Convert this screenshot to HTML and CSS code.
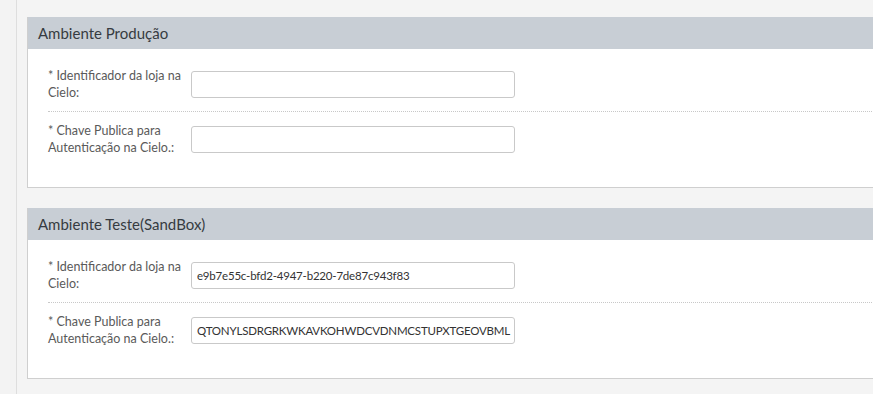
FILE: index.html
```html
<!DOCTYPE html>
<html lang="pt">
<head>
<meta charset="utf-8">
<link rel="stylesheet" href="styles.css">
</head>
<body>
<div class="page">
  <div class="sidebar"></div>
  <main class="content">
    <section class="panel">
      <header class="panel-head">Ambiente Produção</header>
      <div class="panel-body">
        <div class="row">
          <label class="label">* Identificador da loja na Cielo:</label>
          <input class="field" type="text" value="">
        </div>
        <div class="row">
          <label class="label">* Chave Publica para Autenticação na Cielo.:</label>
          <input class="field" type="text" value="">
        </div>
      </div>
    </section>
    <section class="panel">
      <header class="panel-head">Ambiente Teste(SandBox)</header>
      <div class="panel-body">
        <div class="row">
          <label class="label">* Identificador da loja na Cielo:</label>
          <input class="field" type="text" value="e9b7e55c-bfd2-4947-b220-7de87c943f83">
        </div>
        <div class="row">
          <label class="label">* Chave Publica para Autenticação na Cielo.:</label>
          <input class="field" type="text" value="QTONYLSDRGRKWKAVKOHWDCVDNMCSTUPXTGEOVBML">
        </div>
      </div>
    </section>
  </main>
</div>
</body>
</html>
```

FILE: styles.css
```css
html, body {
  margin: 0;
  padding: 0;
  background: #f4f4f4;
  overflow: hidden;
  font-family: "Lato", "Open Sans", sans-serif;
}
.page {
  display: flex;
  min-height: 394px;
  width: 920px;
}
.sidebar {
  width: 16px;
  flex: none;
  background: #f3f3f3;
  border-right: 1px solid #dedede;
}
.content {
  flex: 1;
  padding: 17px 0 0 10px;
}
.panel {
  background: #fff;
  border-left: 1px solid #cfcfcf;
  border-bottom: 1px solid #cfcfcf;
  margin-bottom: 20px;
}
.panel-head {
  height: 32px;
  line-height: 32px;
  background: #c8ced5;
  color: #363b41;
  font-size: 15px;
  padding-left: 10px;
}
.panel-body {
  padding: 8px 0 20px 20px;
}
.row {
  display: flex;
  align-items: center;
  height: 54px;
  border-bottom: 1px dotted #c8c8c8;
}
.row:last-child {
  border-bottom: 1px solid transparent;
}
.label {
  width: 143px;
  flex: none;
  font-size: 12.5px;
  line-height: 17px;
  color: #5a5a5a;
  padding-right: 4px;
  box-sizing: border-box;
}
.field {
  width: 324px;
  height: 27px;
  box-sizing: border-box;
  border: 1px solid #c9c9c9;
  border-radius: 3px;
  padding: 0 1px 0 5px;
  font-family: "Lato", "Open Sans", sans-serif;
  font-size: 11.5px;
  letter-spacing: -0.2px;
  color: #333;
  background: #fff;
  outline: none;
}
```
